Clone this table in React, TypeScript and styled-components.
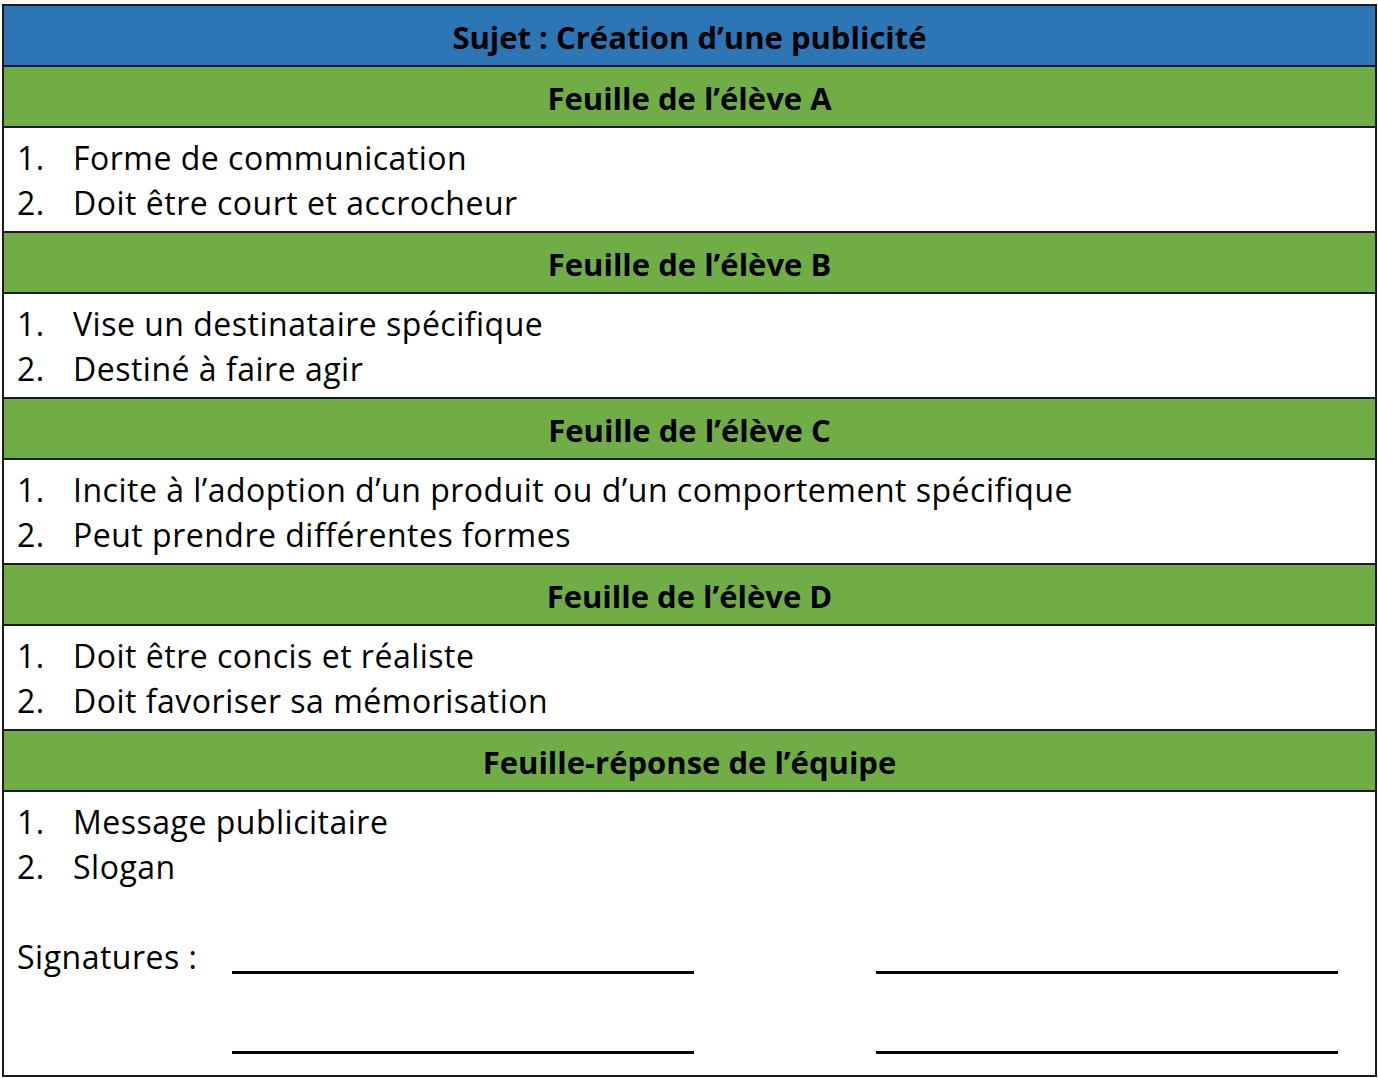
import React from "react";
import styled, { createGlobalStyle } from "styled-components";

const Global = createGlobalStyle`
  html, body { margin: 0; padding: 0; background: #ffffff; }
  body { font-family: "Open Sans", "Liberation Sans", sans-serif; color: #000; }
`;

const Table = styled.div`
  box-sizing: border-box;
  margin: 4px 0 0 2px;
  width: 1375px;
  border: 2px solid #1c1c1c;
  display: flex;
  flex-direction: column;
`;

const Band = styled.div<{ $tone: "blue" | "green" }>`
  box-sizing: border-box;
  height: 61px;
  border-bottom: 2px solid #1c1c1c;
  background: ${(p) => (p.$tone === "blue" ? "#2E75B6" : "#70AD47")};
  display: flex;
  align-items: center;
  justify-content: center;
  font-weight: 700;
  font-size: 31px;
  letter-spacing: 0px;
  padding-top: 2px;
`;

const Body = styled.div<{ $h: number; $last?: boolean }>`
  box-sizing: border-box;
  height: ${(p) => p.$h}px;
  border-bottom: ${(p) => (p.$last ? "none" : "2px solid #1c1c1c")};
  padding: 7px 0 0 13px;
  background: #fff;
`;

const Item = styled.div`
  display: grid;
  grid-template-columns: 56px 1fr;
  font-size: 32px;
  line-height: 45px;
  letter-spacing: 0.5px;
`;

const Signatures = styled.div`
  display: grid;
  grid-template-columns: 215px 462px 182px 462px;
  grid-template-rows: 45px 80px;
  margin-top: 45px;
  font-size: 32px;
  line-height: 45px;
  letter-spacing: 0.5px;
`;

const Label = styled.div``;

const Line = styled.div`
  align-self: end;
  height: 3px;
  background: #000;
  margin-bottom: 5px;
`;

const Gap = styled.div``;

const sections = [
  { title: "Feuille de l’élève A", items: ["Forme de communication", "Doit être court et accrocheur"] },
  { title: "Feuille de l’élève B", items: ["Vise un destinataire spécifique", "Destiné à faire agir"] },
  {
    title: "Feuille de l’élève C",
    items: ["Incite à l’adoption d’un produit ou d’un comportement spécifique", "Peut prendre différentes formes"],
  },
  { title: "Feuille de l’élève D", items: ["Doit être concis et réaliste", "Doit favoriser sa mémorisation"] },
];

export default function App() {
  return (
    <>
      <Global />
      <Table>
        <Band $tone="blue">Sujet : Création d’une publicité</Band>
        {sections.map((s) => (
          <React.Fragment key={s.title}>
            <Band $tone="green">{s.title}</Band>
            <Body $h={105}>
              {s.items.map((it, i) => (
                <Item key={it}>
                  <span>{i + 1}.</span>
                  <span>{it}</span>
                </Item>
              ))}
            </Body>
          </React.Fragment>
        ))}
        <Band $tone="green">Feuille-réponse de l’équipe</Band>
        <Body $h={283} $last>
          <Item>
            <span>1.</span>
            <span>Message publicitaire</span>
          </Item>
          <Item>
            <span>2.</span>
            <span>Slogan</span>
          </Item>
          <Signatures>
            <Label>Signatures :</Label>
            <Line />
            <Gap />
            <Line />
            <Gap />
            <Line />
            <Gap />
            <Line />
          </Signatures>
        </Body>
      </Table>
    </>
  );
}
